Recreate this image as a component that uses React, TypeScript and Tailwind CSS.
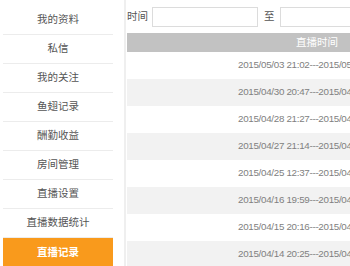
import React from 'react'

const menu = ['我的资料', '私信', '我的关注', '鱼翅记录', '酬勤收益', '房间管理', '直播设置', '直播数据统计']

const records = [
  '2015/05/03 21:02---2015/05/03 23:41',
  '2015/04/30 20:47---2015/04/30 23:15',
  '2015/04/28 21:27---2015/04/28 23:50',
  '2015/04/27 21:14---2015/04/27 23:32',
  '2015/04/25 12:37---2015/04/25 14:06',
  '2015/04/16 19:59---2015/04/16 22:18',
  '2015/04/15 20:16---2015/04/15 22:40',
  '2015/04/14 20:25---2015/04/14 22:51',
]

const font = { fontFamily: '"Liberation Sans", "Noto Sans CJK SC", sans-serif' }

export default function App() {
  return (
    <div className="flex h-[266px] w-[350px] overflow-hidden bg-white" style={font}>
      <div className="ml-[3px] w-[110px] shrink-0 pt-[6px]">
        {menu.map((m) => (
          <div key={m} className="flex h-[29px] items-center justify-center border-b border-[#ececec] text-[10.5px] text-[#555]">
            {m}
          </div>
        ))}
        <div className="flex h-[29px] items-center justify-center bg-[#f99a1c] text-[10.5px] font-bold text-white">
          直播记录
        </div>
      </div>

      <div className="ml-[11px] flex-1 border-l-2 border-[#efefef]">
        <div className="flex items-center pt-[7px] text-[10.5px] text-[#555] whitespace-nowrap">
          <span className="ml-[1px]">时间</span>
          <div className="ml-[4px] h-[20px] w-[106px] shrink-0 border border-[#dcdcdc]" />
          <span className="ml-[6px]">至</span>
          <div className="ml-[5px] h-[20px] w-[110px] shrink-0 border border-[#dcdcdc]" />
        </div>

        <div className="mt-[6px] ml-[1px] w-[400px] whitespace-nowrap">
          <div className="flex h-[19px] items-center bg-[#c2c2c2] pl-[169px] text-[10.5px] text-white">
            直播时间
          </div>
          {records.map((r, i) => (
            <div
              key={r}
              className={`flex h-[27px] items-center pl-[111px] text-[9.8px] tracking-[-0.3px] text-[#808080] ${i % 2 === 1 ? 'bg-[#f2f2f2]' : 'bg-white'}`}
            >
              {r}
            </div>
          ))}
        </div>
      </div>
    </div>
  )
}
